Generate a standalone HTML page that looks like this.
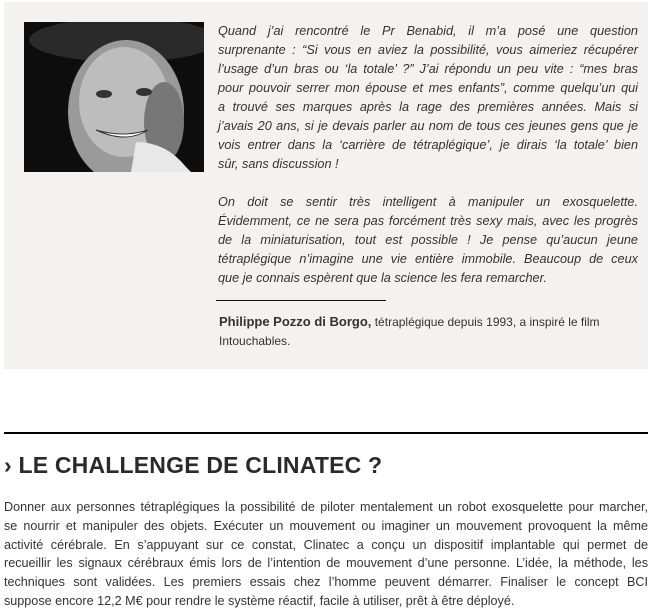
<!DOCTYPE html>
<html><head><meta charset="utf-8"><style>
body{margin:0;width:653px;height:612px;background:#fff;overflow:hidden;font-family:"Liberation Sans",sans-serif;color:#333}
.box{position:absolute;left:4px;top:2px;width:644px;height:367px;background:#f3f2f0}
.photo{position:absolute;left:24px;top:22px;width:180px;height:150px;background:#111;overflow:hidden}
.q{position:absolute;left:218px;top:22px;width:420px;font-style:italic;font-size:12.7px;line-height:19px;color:#333}
.q p{margin:0 0 19px}
.j{display:block;text-align:justify;text-align-last:justify;white-space:nowrap}
.l{display:block;white-space:nowrap}
.rule{position:absolute;left:216px;top:300px;width:170px;height:1px;background:#111}
.sig{position:absolute;left:219px;top:312px;width:420px;font-size:12px;line-height:19px;color:#333}
.sig b{font-size:13px}
.hr{position:absolute;left:4px;top:432px;width:644px;height:2px;background:#000}
h2{position:absolute;left:4px;top:452px;margin:0;font-size:23px;font-weight:bold;color:#2a2a2a;letter-spacing:0.2px}
.body{position:absolute;left:4px;top:498px;width:644px;font-size:12.6px;line-height:18.8px;color:#333}
</style></head><body>
<div class="box"></div>
<div class="photo">
<svg width="180" height="150" viewBox="0 0 180 150">
<rect width="180" height="150" fill="#0d0d0d"/>
<ellipse cx="100" cy="18" rx="95" ry="22" fill="#2a2a2a"/>
<ellipse cx="102" cy="90" rx="58" ry="72" fill="#9a9a9a"/>
<ellipse cx="100" cy="80" rx="45" ry="55" fill="#bdbdbd"/>
<ellipse cx="140" cy="100" rx="20" ry="40" fill="#777"/>
<path d="M112 120 q30 0 50 25 l5 5 h-60z" fill="#e8e8e8"/>
<ellipse cx="80" cy="72" rx="8" ry="4" fill="#333"/>
<ellipse cx="120" cy="70" rx="8" ry="4" fill="#333"/>
<path d="M72 108 q30 14 52 0 q-25 8 -52 0z" fill="#fff" stroke="#333"/>
</svg></div>
<div class="q">
<p><span class="j">Quand j’ai rencontré le Pr Benabid, il m’a posé une question</span><span class="j">surprenante : “Si vous en aviez la possibilité, vous aimeriez récupérer</span><span class="j">l’usage d’un bras ou ‘la totale’ ?” J’ai répondu un peu vite : “mes bras</span><span class="j">pour pouvoir serrer mon épouse et mes enfants”, comme quelqu’un qui</span><span class="j">a trouvé ses marques après la rage des premières années. Mais si</span><span class="j">j’avais 20 ans, si je devais parler au nom de tous ces jeunes gens que je</span><span class="j">vois entrer dans la ‘carrière de tétraplégique’, je dirais ‘la totale’ bien</span><span class="l">sûr, sans discussion !</span></p>
<p><span class="j">On doit se sentir très intelligent à manipuler un exosquelette.</span><span class="j">Évidemment, ce ne sera pas forcément très sexy mais, avec les progrès</span><span class="j">de la miniaturisation, tout est possible ! Je pense qu’aucun jeune</span><span class="j">tétraplégique n’imagine une vie entière immobile. Beaucoup de ceux</span><span class="l">que je connais espèrent que la science les fera remarcher.</span></p>
</div>
<div class="rule"></div>
<div class="sig"><b>Philippe Pozzo di Borgo,</b> tétraplégique depuis 1993, a inspiré le film Intouchables.</div>
<div class="hr"></div>
<h2>› LE CHALLENGE DE CLINATEC ?</h2>
<div class="body"><span class="j">Donner aux personnes tétraplégiques la possibilité de piloter mentalement un robot exosquelette pour marcher,</span><span class="j">se nourrir et manipuler des objets. Exécuter un mouvement ou imaginer un mouvement provoquent la même</span><span class="j">activité cérébrale. En s’appuyant sur ce constat, Clinatec a conçu un dispositif implantable qui permet de</span><span class="j">recueillir les signaux cérébraux émis lors de l’intention de mouvement d’une personne. L’idée, la méthode, les</span><span class="j">techniques sont validées. Les premiers essais chez l’homme peuvent démarrer. Finaliser le concept BCI</span><span class="l">suppose encore 12,2 M€ pour rendre le système réactif, facile à utiliser, prêt à être déployé.</span></div>
</body></html>
